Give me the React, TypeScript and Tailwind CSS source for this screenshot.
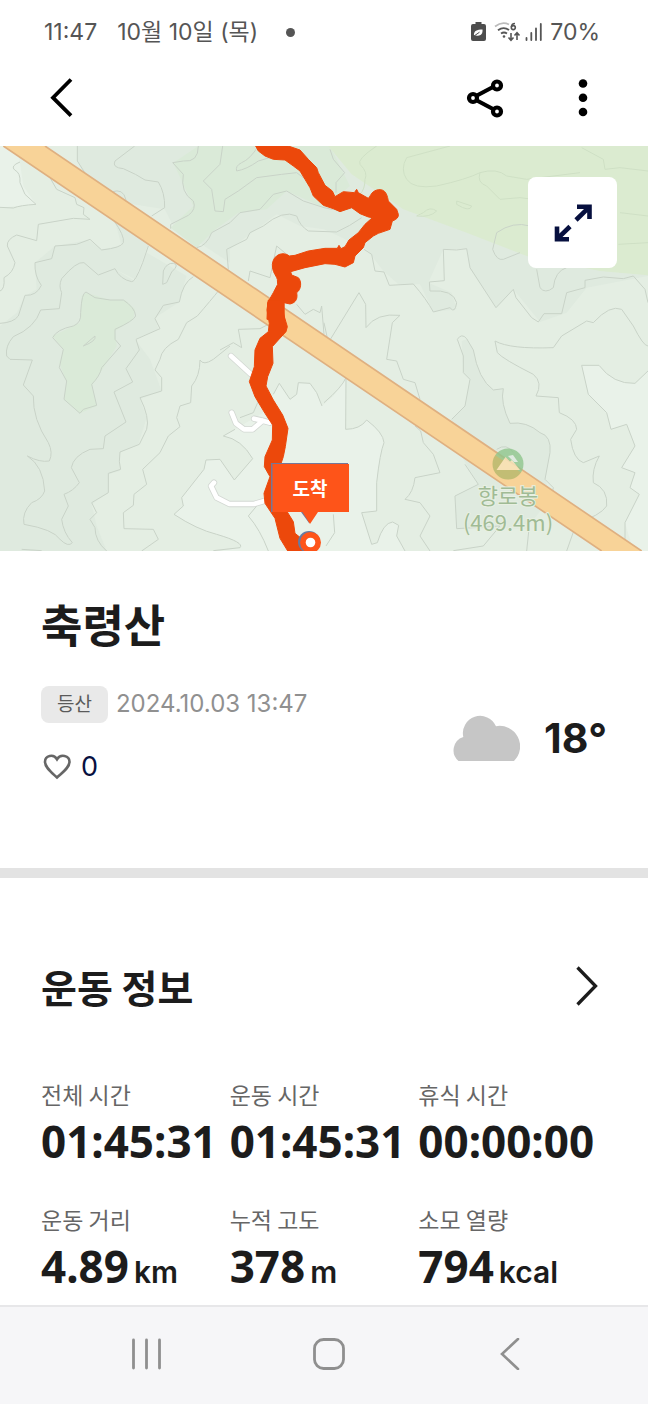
import React from 'react';

const stats = [
  { label: '전체 시간', value: '01:45:31', unit: '' },
  { label: '운동 시간', value: '01:45:31', unit: '' },
  { label: '휴식 시간', value: '00:00:00', unit: '' },
  { label: '운동 거리', value: '4.89', unit: 'km' },
  { label: '누적 고도', value: '378', unit: 'm' },
  { label: '소모 열량', value: '794', unit: 'kcal' },
];

const StatusBar: React.FC = () => (
  <div className="flex h-16 items-center justify-between pr-12 pl-11 font-['Inter','Noto_Sans_CJK_KR',sans-serif] text-[23px] leading-8 text-[#555]">
    <div className="flex items-center">
      <span>11:47</span>
      <span className="ml-5">10월 10일 (목)</span>
      <span className="ml-7 size-[9px] rounded-full bg-[#555]" />
    </div>
    <div className="flex items-center">
      <svg className="h-5 w-[15px]" viewBox="0 0 15 20" fill="none">
        <path d="M4.5 0h6v2H13a2 2 0 0 1 2 2v13a2 2 0 0 1-2 2H2a2 2 0 0 1-2-2V4a2 2 0 0 1 2-2h2.500z" fill="#4d4d4d" />
        <path d="M3 13.500C2.500 9 6 7.500 11.500 7.500C12 12 9.500 14.500 5 13.500" fill="#fff" />
        <path d="M2.800 14.200L8.500 10.200" stroke="#4d4d4d" strokeWidth="1" />
      </svg>
      <svg className="ml-2 h-5 w-[27px]" viewBox="0 0 27 20" fill="none" stroke="#555" strokeWidth="1.800">
        <path d="M1 4.500Q8 -1 15 2.500" stroke="#bbb" />
        <path d="M4 8.200Q9.500 4 15 8" />
        <path d="M7 11.500Q10 9.500 13 11.500" />
        <circle cx="10" cy="14.500" r="1.300" fill="#555" stroke="none" />
        <path d="M21 1.500Q17.500 1.500 17.500 5" strokeWidth="1.600" />
        <circle cx="19.300" cy="5.600" r="2" strokeWidth="1.600" />
        <path d="M17 11v7M14.500 15.500L17 18.200l2.500-2.700M23 18v-7M20.500 13.500L23 10.800l2.500 2.700" strokeWidth="1.600" />
      </svg>
      <svg className="ml-1 h-5 w-[17px]" viewBox="0 0 17 20" fill="none" stroke="#555" strokeWidth="1.800" strokeLinecap="round">
        <path d="M1.500 16v2M6.300 11v7M11 6.500v11.500M15.800 2v16" />
      </svg>
      <span className="ml-2">70%</span>
    </div>
  </div>
);

const Header: React.FC = () => (
  <header className="flex h-[82px] items-center justify-between pr-[55px] pb-[14px] pl-[50px]">
    <button type="button" aria-label="뒤로">
      <svg className="h-10 w-6" viewBox="0 0 24 40" fill="none" stroke="#000" strokeWidth="3.800">
        <path d="M21 1.500L3 19.700l18 18" />
      </svg>
    </button>
    <div className="flex items-center">
      <button type="button" aria-label="공유">
        <svg className="h-10 w-[38px]" viewBox="0 0 38 40" fill="none" stroke="#000" strokeWidth="4.200">
          <path d="M10 18L27 9M10 22L27 31" />
          <circle cx="7" cy="20" r="4" />
          <circle cx="31" cy="7.500" r="4" />
          <circle cx="31" cy="33.500" r="4" />
        </svg>
      </button>
      <button type="button" aria-label="더보기" className="ml-[69px]">
        <svg className="h-10 w-5" viewBox="0 0 20 40">
          <circle cx="10" cy="5.500" r="4.300" />
          <circle cx="10" cy="19.800" r="4.300" />
          <circle cx="10" cy="34" r="4.300" />
        </svg>
      </button>
    </div>
  </header>
);

const TrailMap: React.FC = () => (
  <div className="relative">
    <svg className="block w-full" viewBox="0 0 648 405" fill="none">
      <defs>
        <clipPath id="summit">
          <circle cx="508" cy="318" r="15.500" />
        </clipPath>
      </defs>
      <rect width="648" height="405" fill="#e4eee3" />
      <g transform="scale(0.33333)">
        {/* elevation tints */}
        <path d="M232 0L234 52L260 92L370 170L494 190L520 240L690 350L690 310L830 205L900 240L972 250L1100 310L1150 375L1195 415L1260 415L1300 498L1370 490L1355 440L1285 410L1330 310L1400 310L1410 370L1490 485L1540 430L1620 528L1700 500L1760 425L1944 390V0Z" fill="#dfeadf" />
        <path d="M595 0L520 50L580 180L512 245L590 305L640 255L715 200L800 190L860 135L972 185L1050 120L990 0Z" fill="#daead8" />
        <path d="M0 612V540L50 500L75 450L110 430L105 350L165 300L265 282L305 310L365 300L345 225L445 295L405 400L345 370L295 388L250 348L185 400L180 488L125 490L0 530ZM0 530L125 490L180 488L185 400L250 348L295 388L345 370L405 405L440 320L560 390L535 470L465 515L475 550L405 580L450 640L485 735L420 760L440 815L415 895L360 920L360 975L325 985L325 1040L275 1075L290 1140L320 1215H0Z" fill="#dfeadf" />
        <path d="M258 440L330 462L375 462L405 490L400 520L345 555L350 600L320 650L275 720L290 780L240 802L192 760L200 710L178 650L190 610L158 570L240 530L245 450Z" fill="#daead8" />
        <path d="M0 0H50L60 50L70 120L108 175L0 185Z" fill="#e9f2e9" />
        <path d="M985 0L1055 85L1210 190L1400 260L1580 330L1800 375L1944 388V0Z" fill="#dbebd0" />
        <path d="M820 745L838 712L870 760L890 745L895 710L930 712L950 740L966 780L1000 750L1038 695L1037 850Q1080 850 1100 822Q1150 860 1152 890Q1140 920 1130 1010L1130 1095L1085 1100L1115 1195L1132 1190Q1150 1130 1178 1128L1196 1138L1190 1170L1215 1215H660L720 1205Q735 1190 650 1165Q590 1150 522 1105L550 1080L545 1055L612 970L618 942L660 940L703 1002L758 938Q725 880 670 870L790 800Z" fill="#e9f2e9" />
        <path d="M1745 658H1797Q1840 715 1905 712L1944 675V1215H1900L1875 1130L1918 1045L1890 1025L1905 980L1865 965L1905 900L1880 835L1833 850L1820 800L1765 745Z" fill="#e9f2e9" />
        <path d="M1385 585L1390 680L1410 700L1395 780L1355 820L1390 940L1435 1015L1365 1050L1370 1148H1580L1655 1050L1635 1000L1650 920Q1655 870 1620 860Q1580 825 1530 832Q1500 770 1510 728L1480 732Q1435 700 1420 612L1400 580Z" fill="#dfeadf" />
        <g stroke="#c9d3c8" strokeWidth="3" strokeLinejoin="round">
          <path d="M60 48Q30 60 44 72Q62 80 60 110L75 145L108 175Q60 178 40 186L0 184" />
          <path d="M232 0V45L262 92M404 0L345 45Q335 65 370 68Q410 85 435 102L475 108Q495 140 494 185L455 210M335 138Q370 125 378 162" />
          <path d="M150 95L170 130L225 155L230 175L252 185L250 205L270 220L220 217L115 235L110 284L50 267Q20 280 22 300L45 350Q40 380 12 395Q15 430 0 435" />
          <path d="M340 222Q375 270 370 290Q365 305 305 312L270 280L230 295L165 300L155 338L105 350Q103 390 124 418Q110 450 75 448L55 510Q40 530 0 532" />
          <path d="M445 300L428 350Q405 410 395 407Q360 400 345 368L295 387L252 350Q230 345 185 398Q175 420 185 440L178 488L122 492Q105 545 40 572Q15 600 20 630L30 640L97 642L70 717L100 750Q98 820 145 890Q160 920 148 945Q120 950 82 930Q130 960 134 1035Q125 1060 95 1070Q65 1100 72 1135Q160 1150 180 1180Q205 1205 217 1190Q190 1160 185 1120L205 1080L192 1045Q220 1035 238 1010L214 965Q220 930 270 910L310 908L315 870L378 828L342 738L398 708L378 668L418 612L408 580L480 548L465 518L490 478L538 468Q548 410 580 392" />
          <path d="M258 438L285 455L330 462L370 462Q405 485 407 510Q400 525 345 550L345 580L362 600L305 665Q300 690 275 715L290 778L250 790L240 802L192 760L200 705L178 665L190 610L158 575Q170 550 220 540Q245 530 242 500Q245 440 258 438M250 600L285 570Q290 585 250 600" />
          <path d="M655 435Q635 460 592 510L560 530L535 580Q485 605 480 640L465 672L485 695L485 735L420 755Q450 815 440 850L418 895L360 918Q355 950 362 970L325 982L325 1040L275 1070L290 1100L270 1120L285 1145Q285 1185 320 1215" />
          <path d="M690 600L640 640Q610 660 600 642Q600 690 575 720L572 770L540 780L530 815L540 842L505 870L480 920L428 970L440 1015L402 1045L400 1078L370 1100L372 1148L460 1150L475 1180L425 1215M65 1210L125 1214" />
          <path d="M595 0Q595 50 550 45L518 50L550 85Q540 140 580 165Q590 190 565 208L512 235V248" />
          <path d="M668 0L660 55L610 105L635 130L645 195L670 197L675 160L715 135L770 95L845 85L890 80L930 110L972 138M775 0Q750 40 725 50Q705 60 710 75Q740 70 775 45L860 20" />
          <path d="M590 305Q620 300 635 260L690 230L720 200L780 190L820 145L860 135L910 165L972 185Q1020 200 1080 180" />
          <path d="M685 370L680 310L740 280L750 260L790 240Q850 190 890 210Q900 240 925 255L1010 258Q1050 240 1085 215M745 405L750 375L810 395L830 300L860 325" />
          <path d="M488 415L490 375Q500 350 520 352Q540 355 515 378L500 410Z" />
          <path d="M890 475L915 505L940 490L960 500L965 480L972 565M715 550L725 605L700 590L660 612M715 550L780 548L815 530" />
          <path d="M1092 310L1115 325L1125 375L1152 378L1168 418L1240 414Q1280 460 1300 498L1350 485Q1365 505 1370 470Q1360 430 1290 435L1288 408L1333 404L1330 310L1370 312L1400 308L1410 365L1488 485L1540 430L1548 455L1595 515L1615 528L1632 503H1685L1700 440L1755 425L1755 403L1810 393L1870 398L1900 390L1935 430L1944 470" />
          <path d="M972 530L985 590L1077 440L1097 475L1098 545Q1130 500 1200 508L1177 530L1160 640L1190 645L1210 700L1245 710L1260 760M972 770Q1025 725 1038 695L1037 850Q1080 850 1100 822Q1150 860 1152 890Q1140 920 1130 1010L1130 1095L1085 1100L1115 1195L1132 1190Q1150 1130 1178 1128L1196 1138L1190 1170L1215 1215" />
          <path d="M1372 580Q1385 560 1400 578L1420 612Q1435 700 1480 732L1510 728Q1500 770 1530 832Q1580 825 1620 860Q1655 870 1650 920L1635 1000L1660 1025L1655 1050M1372 580L1390 630V680L1410 700L1395 780L1355 820" />
          <path d="M1485 585L1492 620Q1510 640 1600 685Q1630 710 1608 750L1675 755L1678 800Q1730 820 1730 850L1712 880Q1720 940 1750 950L1798 930Q1775 970 1780 1010Q1825 1030 1820 1080Q1800 1110 1730 1130L1700 1215M1485 585Q1530 610 1660 605L1685 570L1760 525L1780 530Q1830 475 1865 490L1900 540Q1930 600 1944 600" />
          <path d="M1745 658H1797Q1840 715 1905 712L1944 675M1745 658L1765 745L1820 800L1833 850L1880 835L1905 900L1865 965L1905 980L1890 1025L1918 1045L1875 1130L1875 1190" />
          <path d="M1245 840L1262 855L1270 890L1300 925L1320 980L1245 995Q1240 1040 1215 1060L1260 1070L1290 1110L1260 1170L1290 1215M1395 955L1435 1015L1365 1050L1370 1148L1500 1140L1450 1200L1360 1214M1490 910Q1520 890 1540 920M1590 1120L1580 1215" />
          <path d="M820 745L838 712L870 760L890 745L895 710L930 712L950 740L966 780M670 870Q725 880 758 938L703 1002L660 940L618 942L612 970L545 1055L550 1080L522 1105Q590 1150 650 1165Q735 1190 720 1205L640 1214M745 1110Q780 1150 805 1215M720 815L760 800L775 765M670 870L705 850M745 1110L770 1080M1000 1105L1004 1160L978 1200" />
        </g>
        <g stroke="#cfe0c5" strokeWidth="3">
          <path d="M1130 0Q1070 40 1080 55Q1105 80 1095 100Q1095 130 1080 145M1350 0L1220 35Q1200 70 1220 100Q1240 130 1310 120Q1400 100 1440 80Q1430 110 1460 120L1500 160L1560 155L1600 160L1660 220M1440 80Q1490 65 1520 90L1580 100L1740 80M1745 5L1810 40L1815 70L1860 65L1944 75M1860 200L1944 210M1855 295L1944 290M1250 210Q1290 215 1310 195Q1290 180 1270 200Q1250 210 1250 210M1370 165L1415 180Q1410 200 1370 175Z" />
        </g>
        <path d="M990 10L1000 40L1034 80L1008 110V140M1478 310L1490 260Q1540 225 1590 240M1478 310Q1490 345 1510 340L1560 320M1610 370L1620 425Q1635 445 1660 425Q1665 375 1700 365" stroke="#c9d3c8" strokeWidth="3" />

        {/* side paths */}
        <g stroke="#d3d8d3" strokeWidth="19" strokeLinecap="round" strokeLinejoin="round">
          <path d="M693 630L752 684M695 800L708 832L732 850L758 850L788 824L762 818M788 824L810 830M642 1010L633 1020L650 1055L688 1074L762 1074L795 1064" />
        </g>
        <g stroke="#fff" strokeWidth="14" strokeLinecap="round" strokeLinejoin="round">
          <path d="M693 630L752 684M695 800L708 832L732 850L758 850L788 824L762 818M788 824L810 830M642 1010L633 1020L650 1055L688 1074L762 1074L795 1064" />
        </g>

        {/* road */}
        <path d="M10 0L1805 1215H1925L135 0Z" fill="#f8d398" />
        <path d="M10 0L1805 1215M135 0L1925 1215" stroke="#dfb081" strokeWidth="5" />
      </g>

      {/* summit */}
      <g opacity="0.8" clipPath="url(#summit)">
        <rect x="492" y="302" width="32" height="32" fill="#8fc68d" />
        <path d="M492 307L532 334H492Z" fill="#b4b86c" />
        <path d="M496.500 324L505.500 311L510 315.500L512 314L520 324Z" fill="#f7e5bd" />
        <path d="M508 310L513 309L518 316L514 316Z" fill="#dfeadf" />
      </g>
      <g fill="#a0bb95" stroke="#e8f0e2" strokeWidth="2" paintOrder="stroke" textAnchor="middle" className="font-['Noto_Sans_CJK_KR',sans-serif] text-[22px]">
        <text x="508" y="358">향로봉</text>
        <text x="508" y="385">(469.4m)</text>
      </g>

      {/* recorded track */}
      <g transform="scale(0.33333)" fill="#ec480b" stroke="#ec480b" strokeWidth="3" strokeLinejoin="round">
        <path transform="translate(735 0)" d="M32 0L40 15L60 30L85 40L120 42L145 60L165 75L180 100L195 125L205 150L235 178L265 188L285 197L320 185L345 203L370 213L382 215L360 235L340 260L312 282L300 302L288 308L282 298L277 307L240 307L190 315L150 328L133 330C115 315 85 325 82 355C82 380 92 385 97 400L98 415L85 440L68 470L66 520H118L117 470L135 474C155 470 158 455 155 440C170 430 170 405 160 395L140 387L137 377L180 365L240 353L270 355L300 363L325 350L330 330L355 305L360 290L385 270L400 262L435 250L442 225Q462 218 460 205L455 190L430 165C425 135 415 130 400 131C380 135 380 145 370 157L340 140L335 130L328 140L295 137L270 152L262 135L240 118L220 80L215 65L190 40L165 12L130 0Z" />
        <path transform="translate(600 462)" d="M205 0L201 30L208 70L205 95L180 115L165 150L163 200L148 245L165 290L195 340L218 375L217 420L195 470L193 500L210 530L192 580L195 610L225 655L240 715L265 756H310V720L285 700L280 665L262 636L240 600V500L250 470L256 440L264 385L248 345L220 300L198 258L203 230L219 190L217 140L235 120L258 95L262 80L250 40L252 10L255 0Z" />
      </g>

      {/* finish marker */}
      <circle cx="309" cy="396" r="11" fill="#677aa0" />
      <circle cx="310.500" cy="396.500" r="10.500" fill="#fe5419" />
      <circle cx="310.500" cy="396.500" r="4.800" fill="#fff" />
      <path d="M271 317H348V366H317L309 377L301 366H271Z" fill="#747799" />
      <path d="M272.500 318H349V366H318L310 378L302.500 366H272.500Z" fill="#fe5419" />
      <text x="310" y="350" fill="#fff" textAnchor="middle" className="font-['Noto_Sans_CJK_KR',sans-serif] text-[19px] font-bold">도착</text>
    </svg>
    <button type="button" aria-label="지도 확대" className="absolute top-[31px] right-[31px] flex h-[91px] w-[89px] items-center justify-center rounded-lg bg-white">
      <svg className="size-[38px]" viewBox="0 0 38 38" fill="none" stroke="#07103f" strokeWidth="4.600">
        <path d="M23 2.800H35.500V15M35 3.300L22 16M15 35.200H3V22.500M3.500 34.700L16 22.500" />
      </svg>
    </button>
  </div>
);

const Summary: React.FC = () => (
  <section className="px-[41px] pt-12 pb-[85px] font-['Inter','Noto_Sans_CJK_KR',sans-serif]">
    <h1 className="text-[45px] leading-[56px] font-bold text-[#1c1c1c]">축령산</h1>
    <div className="mt-[30px] flex items-center justify-between">
      <div>
        <div className="flex items-center">
          <span className="rounded-lg bg-[#e9e9e9] px-4 text-[19px] leading-[37px] text-[#5a5a5a]">등산</span>
          <span className="ml-2 text-2xl leading-[38px] text-[#909090]">2024.10.03 13:47</span>
        </div>
        <button type="button" aria-label="좋아요 0" className="mt-7 flex items-center text-[27px] leading-8 text-[#07103f]">
          <svg className="h-8 w-8" viewBox="0 0 32 32" fill="none" stroke="#666" strokeWidth="2.600">
            <path d="M16 26.500C10 21 4 16.500 4 10.800C4 4.500 12.500 2.500 16 8.200C19.500 2.500 28.500 4.500 28.500 10.800C28.500 16.500 22 21 16 26.500Z" />
          </svg>
          <span className="ml-2">0</span>
        </button>
      </div>
      <div className="flex items-center pt-2">
        <svg className="h-[46px] w-[67px]" viewBox="0 0 67 46" fill="#c6c6c6">
          <path d="M5.500 46A14 14 0 0 1 10.300 22A17.300 17.300 0 0 1 43 11.200A20.500 20.500 0 0 1 61 46Z" />
        </svg>
        <span className="ml-6 text-[41px] leading-[46px] font-bold text-[#1c1c1c]">18°</span>
      </div>
    </div>
  </section>
);

const WorkoutInfo: React.FC = () => (
  <section className="px-[41px] pt-20 pb-[15px] font-['Noto_Sans_CJK_KR',sans-serif] text-[#1c1c1c]">
    <div className="flex items-center justify-between">
      <h2 className="text-[39px] leading-[56px] font-bold">운동 정보</h2>
      <button type="button" aria-label="운동 정보 자세히" className="pr-2">
        <svg className="h-10 w-6" viewBox="0 0 24 40" fill="none" stroke="#1c1c1c" strokeWidth="3.300">
          <path d="M2.500 1.500L20.500 20L2.500 38.500" />
        </svg>
      </button>
    </div>
    <dl className="mt-16 grid grid-cols-3 gap-y-[38px]">
      {stats.map((stat) => (
        <div key={stat.label}>
          <dt className="text-[23px] leading-8 text-[#666]">{stat.label}</dt>
          <dd className="mt-[7px] flex h-12 items-baseline font-['Noto_Sans',sans-serif] text-[44px] leading-[48px] font-bold whitespace-nowrap">
            {stat.value}
            {stat.unit && <span className="ml-[5px] font-['Inter',sans-serif] text-[30px] leading-none font-semibold">{stat.unit}</span>}
          </dd>
        </div>
      ))}
    </dl>
  </section>
);

const NavigationBar: React.FC = () => (
  <nav className="mt-auto flex h-[99px] shrink-0 items-center justify-between border-t-2 border-[#e7e7e9] bg-[#f6f6f8] pr-[122px] pb-1 pl-[131px]">
    <button type="button" aria-label="최근 앱">
      <svg className="size-8" viewBox="0 0 32 32" fill="none" stroke="#8f8f8f" strokeWidth="2.800" strokeLinecap="round">
        <path d="M2.500 2v28M15.500 2v28M28.500 2v28" />
      </svg>
    </button>
    <button type="button" aria-label="홈">
      <svg className="size-8" viewBox="0 0 32 32" fill="none" stroke="#8f8f8f" strokeWidth="2.800">
        <rect x="1.500" y="1.500" width="29" height="29" rx="9" />
      </svg>
    </button>
    <button type="button" aria-label="이전">
      <svg className="size-8" viewBox="0 0 32 32" fill="none" stroke="#8f8f8f" strokeWidth="2.600" strokeLinecap="round">
        <path d="M24 1L8 16l16 15" />
      </svg>
    </button>
  </nav>
);

const App: React.FC = () => (
  <div className="flex min-h-screen flex-col bg-white">
    <StatusBar />
    <Header />
    <main>
      <TrailMap />
      <Summary />
      <div className="h-[10px] bg-[#e3e3e3]" />
      <WorkoutInfo />
    </main>
    <NavigationBar />
  </div>
);

export default App;
